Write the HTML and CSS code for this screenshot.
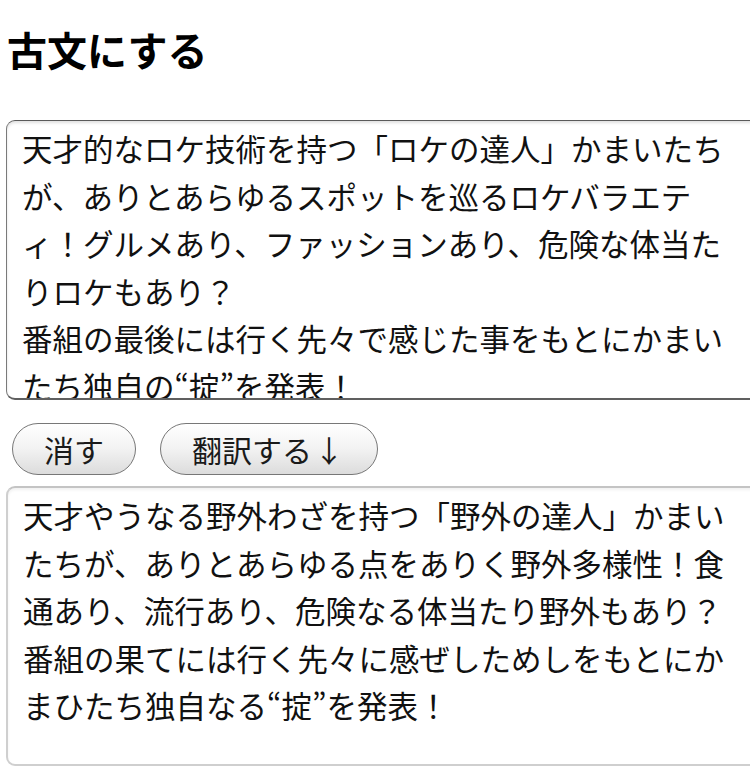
FILE: index.html
```html
<!DOCTYPE html>
<html lang="ja">
<head>
<meta charset="utf-8">
<title>古文にする</title>
<link rel="stylesheet" href="styles.css">
</head>
<body>
<h1 class="title">古文にする</h1>
<textarea class="box box-input">天才的なロケ技術を持つ「ロケの達人」かまいたちが、ありとあらゆるスポットを巡るロケバラエティ！グルメあり、ファッションあり、危険な体当たりロケもあり？
番組の最後には行く先々で感じた事をもとにかまいたち独自の“掟”を発表！</textarea>
<div class="actions">
  <button class="btn">消す</button>
  <button class="btn">翻訳する<span class="arrow">↓</span></button>
</div>
<textarea class="box box-output">天才やうなる野外わざを持つ「野外の達人」かまいたちが、ありとあらゆる点をありく野外多様性！食通あり、流行あり、危険なる体当たり野外もあり？
番組の果てには行く先々に感ぜしためしをもとにかまひたち独自なる“掟”を発表！</textarea>
</body>
</html>
```

FILE: styles.css
```css
html, body {
  margin: 0;
  padding: 0;
  overflow: hidden;
  background: #ffffff;
}
body {
  padding: 0 0 0 6px;
  width: 744px;
  font-family: "Noto Sans CJK JP", "Noto Sans", sans-serif;
  color: #111;
}
.title {
  margin: 0;
  padding-top: 25px;
  font-size: 40px;
  line-height: 48px;
  font-weight: 700;
  color: #000;
  padding-left: 1px;
}
.box {
  display: block;
  box-sizing: border-box;
  width: 758px;
  height: 280px;
  margin: 0;
  padding: 4px 14px 0 15px;
  font-family: "Noto Sans CJK JP", sans-serif;
  font-size: 30.5px;
  line-height: 47.5px;
  color: #111;
  background: #fff;
  border-radius: 9px;
  resize: none;
  overflow: hidden;
  outline: none;
}
.box-input {
  margin-top: 47px;
  border: 1.5px solid #7a7a7a;
  border-top-color: #5a5a5a;
  border-bottom: 2px solid #5f5f5f;
  box-shadow: inset 0 2px 3px rgba(0,0,0,0.12);
}
.box-output {
  margin-top: 11px;
  border: 2px solid #cfcfcf;
  border-top-color: #c4c4c4;
  box-shadow: inset 0 2px 3px rgba(0,0,0,0.06);
}
.actions {
  display: flex;
  gap: 24px;
  margin-top: 23px;
  padding-left: 6px;
}
.btn {
  box-sizing: border-box;
  height: 52px;
  padding: 0 31px;
  font-family: "Noto Sans CJK JP", sans-serif;
  font-size: 30px;
  line-height: 48px;
  color: #1a1a1a;
  border: 1.5px solid #777;
  border-radius: 26px;
  background: linear-gradient(#ffffff, #f2f2f2 50%, #dcdcdc);
}
.arrow {
  display: inline-block;
  width: 34px;
  text-align: center;
}
```
